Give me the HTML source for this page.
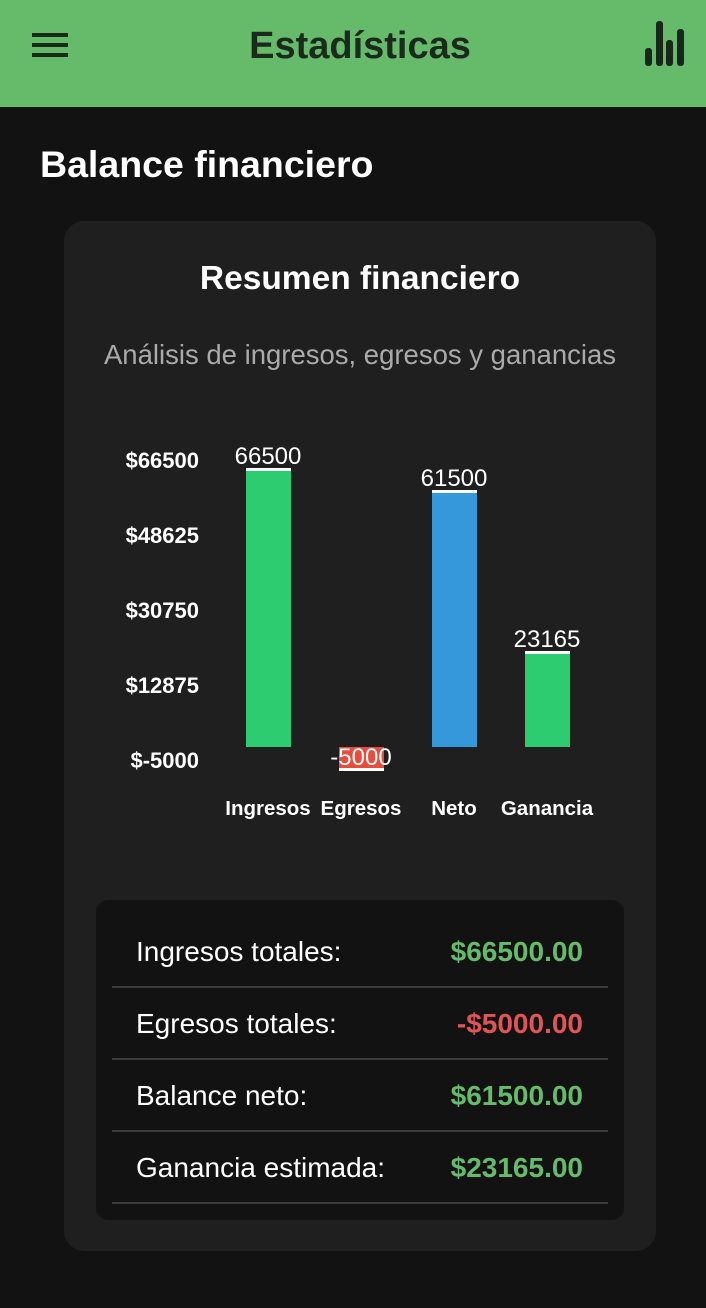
<!DOCTYPE html>
<html><head><meta charset="utf-8"><style>
*{margin:0;padding:0;box-sizing:border-box}
body{width:706px;height:1308px;background:#121212;font-family:"Liberation Sans",sans-serif;color:#fff;position:relative;overflow:hidden}
.hdr{position:absolute;left:0;top:0;width:706px;height:107px;background:#66bb6a}
.hb{position:absolute;left:32px;width:36px;height:4px;background:#1a2a1a}
.ttl{position:absolute;left:0;width:720px;top:25px;text-align:center;font-size:38px;font-weight:bold;color:#1b2a1c;letter-spacing:0px}
.ib{position:absolute;width:7px;background:#1b261b;border-radius:3px;bottom:41px}
.abs{position:absolute}
.card{position:absolute;left:64px;top:221px;width:592px;height:1030px;background:#1f1f1f;border-radius:20px}
.inner{position:absolute;left:96px;top:900px;width:528px;height:320px;background:#121212;border-radius:12px}
.sep{position:absolute;left:112px;width:496px;height:2px;background:#3a3a3a}
.lbl{position:absolute;left:136px;font-size:28px;color:#fff}
.val{position:absolute;right:123px;font-size:28px;font-weight:bold;color:#66bb6a}
.yl{position:absolute;right:507px;font-size:22px;font-weight:bold;color:#fff}
.xl{position:absolute;font-size:20.5px;font-weight:bold;color:#fff;text-align:center;width:100px}
.bar{position:absolute;width:45px;border-top:3px solid #fff}
.bv{position:absolute;font-size:24px;color:#fff;text-align:center;width:100px}
</style></head><body>
<div class="hdr">
<div class="hb" style="top:33px"></div><div class="hb" style="top:43px"></div><div class="hb" style="top:53px"></div>
<div class="ttl">Estadísticas</div>
<div class="ib" style="left:645px;height:18px"></div>
<div class="ib" style="left:656px;height:45px"></div>
<div class="ib" style="left:666px;height:26px"></div>
<div class="ib" style="left:677px;height:37px"></div>
</div>
<div class="abs" style="left:40px;top:143px;font-size:37.5px;font-weight:bold">Balance financiero</div>
<div class="card"></div>
<div class="abs" style="left:64px;width:592px;top:260px;text-align:center;font-size:33.5px;font-weight:bold">Resumen financiero</div>
<div class="abs" style="left:64px;width:592px;top:339px;text-align:center;font-size:27.5px;color:#aaaaaa">Análisis de ingresos, egresos y ganancias</div>

<div class="yl" style="top:448px">$66500</div>
<div class="yl" style="top:523px">$48625</div>
<div class="yl" style="top:598px">$30750</div>
<div class="yl" style="top:673px">$12875</div>
<div class="yl" style="top:748px">$-5000</div>

<div class="bar" style="left:246px;top:468px;height:279px;background:#2ecc71"></div>
<div class="bar" style="left:432px;top:490px;height:257px;background:#3498db"></div>
<div class="bar" style="left:525px;top:651px;height:96px;background:#2ecc71"></div>
<div class="abs" style="left:339px;top:747px;width:45px;height:21px;background:#e74c3c"></div>
<div class="abs" style="left:339px;top:768px;width:45px;height:3px;background:#fff"></div>

<div class="bv" style="left:218px;top:443px">66500</div>
<div class="bv" style="left:404px;top:465px">61500</div>
<div class="bv" style="left:497px;top:626px">23165</div>
<div class="bv" style="left:311px;top:744px">-5000</div>

<div class="xl" style="left:218px;top:797px">Ingresos</div>
<div class="xl" style="left:311px;top:797px">Egresos</div>
<div class="xl" style="left:404px;top:797px">Neto</div>
<div class="xl" style="left:497px;top:797px">Ganancia</div>

<div class="inner"></div>
<div class="lbl" style="top:936px">Ingresos totales:</div><div class="val" style="top:936px">$66500.00</div>
<div class="sep" style="top:986px"></div>
<div class="lbl" style="top:1008px">Egresos totales:</div><div class="val" style="top:1008px;color:#e05555">-$5000.00</div>
<div class="sep" style="top:1058px"></div>
<div class="lbl" style="top:1080px">Balance neto:</div><div class="val" style="top:1080px">$61500.00</div>
<div class="sep" style="top:1130px"></div>
<div class="lbl" style="top:1152px">Ganancia estimada:</div><div class="val" style="top:1152px">$23165.00</div>
<div class="sep" style="top:1202px"></div>
</body></html>
